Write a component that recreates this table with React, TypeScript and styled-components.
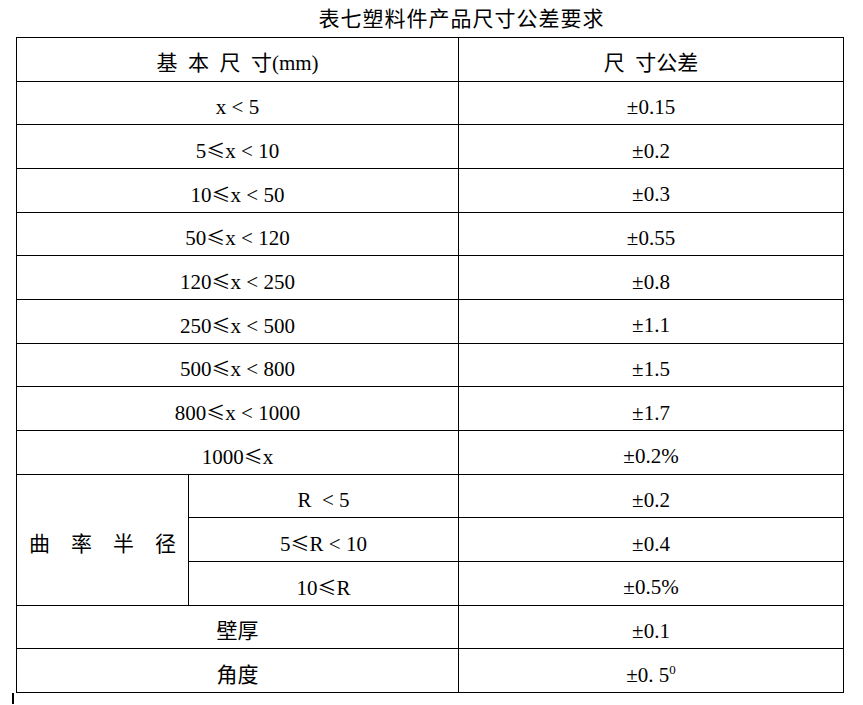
import React from 'react';
import styled, { createGlobalStyle } from 'styled-components';

const GlobalStyle = createGlobalStyle`
  body {
    margin: 0;
    background: #fff;
    color: #000;
    font-family: "Liberation Serif", "Noto Sans CJK SC", serif;
  }
`;

const Page = styled.div`
  width: 863px;
  height: 705px;
  overflow: hidden;
`;

const Title = styled.div`
  height: 37px;
  padding-left: 60px;
  padding-bottom: 3px;
  box-sizing: border-box;
  display: flex;
  align-items: center;
  justify-content: center;
  font-size: 21px;
  letter-spacing: 1px;
`;

const Table = styled.table`
  margin-left: 16px;
  width: 827px;
  border-collapse: collapse;
  table-layout: fixed;
`;

const Cell = styled.td`
  border: 1px solid #000;
  height: 33.67px;
  padding: 9px 0 0;
  text-align: center;
  vertical-align: middle;
  font-size: 21px;
  line-height: 1;
  white-space: pre;

  sup {
    font-size: 13px;
    vertical-align: 8px;
    line-height: 0;
  }
`;

const Le = styled.span`
  font-family: "Noto Sans CJK SC", sans-serif;
  font-size: 19px;
`;

const Caret = styled.div`
  margin-left: 12px;
  width: 2px;
  height: 11px;
  background: #000;
`;

const sizeRows: [string, string, string][] = [
  ['', 'x < 5', '±0.15'],
  ['5', 'x < 10', '±0.2'],
  ['10', 'x < 50', '±0.3'],
  ['50', 'x < 120', '±0.55'],
  ['120', 'x < 250', '±0.8'],
  ['250', 'x < 500', '±1.1'],
  ['500', 'x < 800', '±1.5'],
  ['800', 'x < 1000', '±1.7'],
  ['1000', 'x', '±0.2%'],
];

const radiusRows: [string, string, string][] = [
  ['', 'R  < 5', '±0.2'],
  ['5', 'R < 10', '±0.4'],
  ['10', 'R', '±0.5%'],
];

const Range = ({ low, rest }: { low: string; rest: string }) =>
  low ? (
    <>
      {low}
      <Le>≤</Le>
      {rest}
    </>
  ) : (
    <>{rest}</>
  );

export default function App() {
  return (
    <Page>
      <GlobalStyle />
      <Title>表七塑料件产品尺寸公差要求</Title>
      <Table>
        <colgroup>
          <col style={{ width: 172 }} />
          <col style={{ width: 270 }} />
          <col style={{ width: 385 }} />
        </colgroup>
        <tbody>
          <tr>
            <Cell colSpan={2}>{'基\u2002本\u2002尺\u2002寸(mm)'}</Cell>
            <Cell>{'尺\u2002寸公差'}</Cell>
          </tr>
          {sizeRows.map(([low, rest, tol]) => (
            <tr key={low + rest}>
              <Cell colSpan={2}>
                <Range low={low} rest={rest} />
              </Cell>
              <Cell>{tol}</Cell>
            </tr>
          ))}
          {radiusRows.map(([low, rest, tol], i) => (
            <tr key={low + rest}>
              {i === 0 && (
                <Cell rowSpan={3}>{'曲\u3000率\u3000半\u3000径'}</Cell>
              )}
              <Cell>
                <Range low={low} rest={rest} />
              </Cell>
              <Cell>{tol}</Cell>
            </tr>
          ))}
          <tr>
            <Cell colSpan={2}>壁厚</Cell>
            <Cell>±0.1</Cell>
          </tr>
          <tr>
            <Cell colSpan={2}>角度</Cell>
            <Cell>
              ±0. 5<sup>0</sup>
            </Cell>
          </tr>
        </tbody>
      </Table>
      <Caret />
    </Page>
  );
}
